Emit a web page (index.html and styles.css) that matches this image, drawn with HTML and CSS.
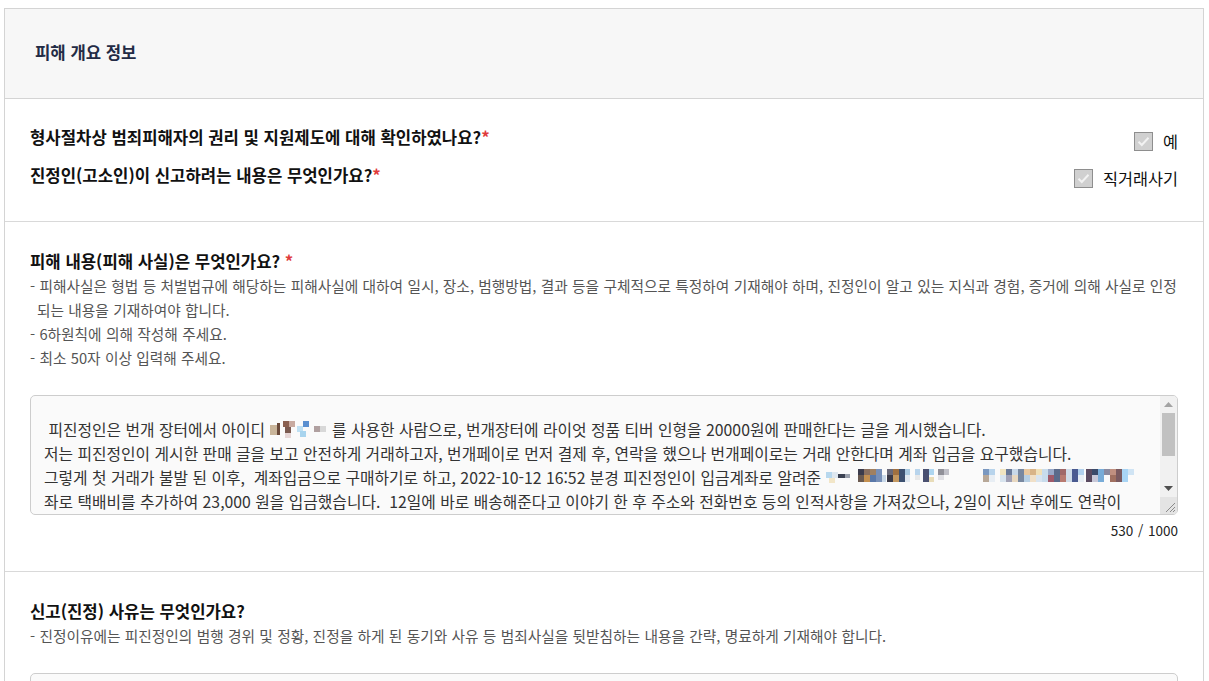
FILE: index.html
```html
<!DOCTYPE html>
<html lang="ko">
<head>
<meta charset="utf-8">
<title>피해 개요 정보</title>
<link rel="stylesheet" href="styles.css">
</head>
<body>
<div class="panel">
  <div class="panel-head"><h2 class="panel-title">피해 개요 정보</h2></div>

  <div class="section sec-check">
    <div class="questions">
      <p class="q">형사절차상 범죄피해자의 권리 및 지원제도에 대해 확인하였나요?<span class="req">*</span></p>
      <p class="q">진정인(고소인)이 신고하려는 내용은 무엇인가요?<span class="req">*</span></p>
    </div>
    <div class="answers">
      <label class="chk"><span class="box"><svg width="19" height="19" viewBox="0 0 19 19"><rect x="0.5" y="0.5" width="18" height="18" fill="#d0d0d0" stroke="#8e8e8e"/><path d="M4.5 9.8 L7.8 13 L14.5 5.8" fill="none" stroke="#f2f2f2" stroke-width="2"/></svg></span><span class="chk-label">예</span></label>
      <label class="chk"><span class="box"><svg width="19" height="19" viewBox="0 0 19 19"><rect x="0.5" y="0.5" width="18" height="18" fill="#d0d0d0" stroke="#8e8e8e"/><path d="M4.5 9.8 L7.8 13 L14.5 5.8" fill="none" stroke="#f2f2f2" stroke-width="2"/></svg></span><span class="chk-label">직거래사기</span></label>
    </div>
  </div>

  <div class="section sec-text">
    <h3 class="s-title">피해 내용(피해 사실)은 무엇인가요? <span class="req">*</span></h3>
    <ul class="guide">
      <li>- 피해사실은 형법 등 처벌법규에 해당하는 피해사실에 대하여 일시, 장소, 범행방법, 결과 등을 구체적으로 특정하여 기재해야 하며, 진정인이 알고 있는 지식과 경험, 증거에 의해 사실로 인정 되는 내용을 기재하여야 합니다.</li>
      <li>- 6하원칙에 의해 작성해 주세요.</li>
      <li>- 최소 50자 이상 입력해 주세요.</li>
    </ul>
    <div class="area">
      <div class="area-text">
        <div class="ln"> 피진정인은 번개 장터에서 아이디 <svg class="mosaic" width="58" height="18" viewBox="0 0 58 18"><rect x="0" y="4" width="7" height="10" fill="#c9b59a"/><rect x="7" y="2" width="3" height="12" fill="#6a4a3a"/><rect x="13" y="0" width="6" height="6" fill="#8a6050"/><rect x="19" y="0" width="6" height="6" fill="#c8aaa0"/><rect x="15" y="6" width="6" height="6" fill="#7a5a50"/><rect x="15" y="12" width="6" height="5" fill="#e6d6d6"/><rect x="27" y="5" width="6" height="6" fill="#bfe0f3"/><rect x="33" y="0" width="6" height="6" fill="#5a8fd0"/><rect x="30" y="10" width="6" height="6" fill="#a8d4ee"/><rect x="44" y="5" width="6" height="6" fill="#b0a0a0"/><rect x="50" y="5" width="6" height="6" fill="#d8d8d8"/></svg> 를 사용한 사람으로, 번개장터에 라이엇 정품 티버 인형을 20000원에 판매한다는 글을 게시했습니다.</div>
        <div class="ln">저는 피진정인이 게시한 판매 글을 보고 안전하게 거래하고자, 번개페이로 먼저 결제 후, 연락을 했으나 번개페이로는 거래 안한다며 계좌 입금을 요구했습니다.</div>
        <div class="ln">그렇게 첫 거래가 불발 된 이후,  계좌입금으로 구매하기로 하고, 2022-10-12 16:52 분경 피진정인이 입금계좌로 알려준 <svg class="mosaic" width="312" height="18" viewBox="0 0 312 18"><rect x="0" y="3" width="6" height="6" fill="#b8d8ee"/><rect x="6" y="3" width="6" height="6" fill="#dfe8f0"/><rect x="3" y="9" width="6" height="5" fill="#f2e6c8"/><rect x="12" y="5" width="7" height="4" fill="#3c4252"/><rect x="19" y="5" width="5" height="4" fill="#9aa0ac"/><rect x="32" y="0" width="6" height="6" fill="#3c3c4c"/><rect x="32" y="6" width="6" height="7" fill="#6a5a50"/><rect x="38" y="0" width="6" height="6" fill="#8a7060"/><rect x="38" y="6" width="6" height="7" fill="#c49050"/><rect x="44" y="0" width="6" height="6" fill="#a08060"/><rect x="44" y="6" width="6" height="7" fill="#5a78a8"/><rect x="50" y="0" width="6" height="13" fill="#7890b8"/><rect x="56" y="6" width="4" height="7" fill="#c8d8e8"/><rect x="61" y="0" width="6" height="6" fill="#6a6a7a"/><rect x="61" y="6" width="6" height="7" fill="#3a3a48"/><rect x="67" y="0" width="6" height="6" fill="#a07040"/><rect x="67" y="6" width="6" height="7" fill="#c49860"/><rect x="73" y="0" width="6" height="13" fill="#3c5070"/><rect x="79" y="0" width="5" height="6" fill="#a8c8e0"/><rect x="79" y="6" width="5" height="7" fill="#e0e8f0"/><rect x="89" y="0" width="5" height="6" fill="#b8d4ec"/><rect x="89" y="6" width="5" height="5" fill="#e8e8e8"/><rect x="97" y="0" width="6" height="13" fill="#4a5070"/><rect x="103" y="0" width="5" height="6" fill="#aed6f0"/><rect x="103" y="8" width="5" height="5" fill="#e8dcb8"/><rect x="112" y="0" width="6" height="6" fill="#909098"/><rect x="118" y="0" width="5" height="6" fill="#c0c0c8"/><rect x="112" y="6" width="6" height="5" fill="#e0e0e4"/><rect x="157" y="0" width="6" height="6" fill="#7a98c0"/><rect x="163" y="0" width="6" height="6" fill="#b8d4ec"/><rect x="157" y="6" width="6" height="7" fill="#b8a898"/><rect x="163" y="6" width="6" height="7" fill="#e8eef4"/><rect x="174" y="0" width="6" height="6" fill="#f0e4c0"/><rect x="174" y="6" width="6" height="7" fill="#d8e4ee"/><rect x="180" y="0" width="6" height="6" fill="#6a7a98"/><rect x="186" y="0" width="6" height="6" fill="#c8d8e8"/><rect x="180" y="6" width="6" height="7" fill="#a0a0b4"/><rect x="186" y="6" width="6" height="7" fill="#e8d8c0"/><rect x="192" y="0" width="6" height="13" fill="#7888a0"/><rect x="198" y="0" width="6" height="6" fill="#e8c8a0"/><rect x="198" y="6" width="6" height="7" fill="#b8d0e4"/><rect x="204" y="0" width="6" height="6" fill="#d8b488"/><rect x="204" y="6" width="6" height="7" fill="#f0e0c8"/><rect x="210" y="0" width="6" height="6" fill="#f0e0b8"/><rect x="210" y="6" width="6" height="7" fill="#d8e4f0"/><rect x="216" y="0" width="6" height="13" fill="#c8dcec"/><rect x="222" y="0" width="6" height="6" fill="#98a8c8"/><rect x="222" y="6" width="6" height="7" fill="#a05a6a"/><rect x="228" y="0" width="6" height="13" fill="#5a6a8a"/><rect x="234" y="0" width="6" height="6" fill="#a06868"/><rect x="234" y="6" width="6" height="7" fill="#b87a70"/><rect x="240" y="0" width="6" height="13" fill="#d0dce8"/><rect x="246" y="0" width="6" height="13" fill="#4a5a90"/><rect x="252" y="0" width="6" height="6" fill="#b0d0ec"/><rect x="252" y="6" width="6" height="7" fill="#e8eef4"/><rect x="260" y="0" width="6" height="13" fill="#5a4a60"/><rect x="266" y="0" width="6" height="6" fill="#3a4a6a"/><rect x="266" y="6" width="6" height="7" fill="#c8c8d8"/><rect x="272" y="0" width="6" height="13" fill="#78acd8"/><rect x="278" y="0" width="6" height="6" fill="#8a8aa0"/><rect x="284" y="0" width="6" height="6" fill="#c09080"/><rect x="284" y="6" width="6" height="7" fill="#a07060"/><rect x="290" y="0" width="6" height="13" fill="#7a5a60"/><rect x="296" y="0" width="6" height="13" fill="#a8d4f4"/><rect x="302" y="0" width="6" height="6" fill="#d0e4f4"/></svg></div>
        <div class="ln">좌로 택배비를 추가하여 23,000 원을 입금했습니다.  12일에 바로 배송해준다고 이야기 한 후 주소와 전화번호 등의 인적사항을 가져갔으나, 2일이 지난 후에도 연락이</div>
      </div>
      <div class="scrollbar">
        <div class="sb-btn"><svg width="9" height="5" viewBox="0 0 9 5"><path d="M0 5 L4.5 0 L9 5Z" fill="#a3a3a3"/></svg></div>
        <div class="sb-track"><div class="sb-thumb"></div></div>
        <div class="sb-btn"><svg width="9" height="5" viewBox="0 0 9 5"><path d="M0 0 L9 0 L4.5 5Z" fill="#505050"/></svg></div>
        <div class="sb-corner"><svg width="17" height="17" viewBox="0 0 17 17"><path d="M15 6 L6 15 M15 10 L10 15 M15 13 L13 15" stroke="#8a8a8a" stroke-width="1"/></svg></div>
      </div>
    </div>
    <div class="counter">530 / 1000</div>
  </div>

  <div class="section sec-text">
    <h3 class="s-title">신고(진정) 사유는 무엇인가요?</h3>
    <ul class="guide">
      <li>- 진정이유에는 피진정인의 범행 경위 및 정황, 진정을 하게 된 동기와 사유 등 범죄사실을 뒷받침하는 내용을 간략, 명료하게 기재해야 합니다.</li>
    </ul>
    <div class="area area-empty"></div>
  </div>
</div>
</body>
</html>
```

FILE: styles.css
```css
* { box-sizing: border-box; }
html, body { background: #fff; }
body {
  margin: 8px 5px 0 4px;
  font-family: "Noto Sans CJK KR", "Noto Sans", sans-serif;
  color: #222;
  overflow: hidden;
}
.panel {
  border: 1px solid #d4d4d4;
  border-bottom: none;
  width: 1200px;
}
.panel-head {
  background: #f7f7f7;
  height: 90px;
  display: flex;
  align-items: center;
  padding-left: 30px;
  border-bottom: 1px solid #d4d4d4;
}
.panel-title {
  margin: 0 0 3px 0;
  font-size: 16.7px;
  font-weight: 700;
  color: #232b45;
  line-height: 24px;
}
.section {
  border-bottom: 1px solid #d9d9d9;
  padding: 27px 25px 31px 25px;
}
.sec-check {
  display: flex;
  justify-content: space-between;
  padding-top: 26px;
  padding-bottom: 31px;
}
.questions { display: flex; flex-direction: column; gap: 14px; }
.q {
  margin: 0;
  font-size: 16.7px;
  font-weight: 700;
  line-height: 24px;
  color: #111;
}
.req { color: #e03b3b; font-weight: 700; }
.answers {
  display: flex;
  flex-direction: column;
  align-items: flex-end;
  gap: 13px;
  padding-top: 4px;
}
.chk {
  display: flex;
  align-items: center;
  gap: 10px;
  height: 24px;
  font-size: 16.3px;
  color: #111;
}
.box { display: block; width: 19px; height: 19px; }
.box svg { display: block; }
.chk-label { line-height: 24px; }
.s-title {
  margin: 0;
  font-size: 16.7px;
  font-weight: 700;
  line-height: 24px;
  color: #111;
}
.guide {
  list-style: none;
  margin: 1px -6px 0 0;
  padding: 0;
  font-size: 14.7px;
  line-height: 24px;
  word-spacing: 0.2px;
  color: #555;
  word-break: keep-all;
}
.guide li {
  padding-left: 7px;
  text-indent: -7px;
}
.area {
  margin-top: 25px;
  height: 120px;
  border: 1px solid #cdcdcd;
  border-radius: 5px;
  background: #fafafa;
  display: flex;
  overflow: hidden;
}
.area-text {
  flex: 1;
  padding: 22px 0 0 13px;
  font-size: 15.8px;
  line-height: 24px;
  color: #333;
  overflow: hidden;
}
.ln { white-space: pre; overflow: hidden; height: 24px; }
.mosaic { display: inline-block; vertical-align: -3px; }
.scrollbar {
  flex: none;
  width: 17px;
  background: #f1f1f1;
  display: flex;
  flex-direction: column;
}
.sb-btn {
  height: 17px;
  display: flex;
  align-items: center;
  justify-content: center;
}
.sb-track { flex: 1; padding: 0 2px; }
.sb-thumb { height: 43px; background: #c1c1c1; }
.sb-corner { height: 17px; background: #e4e4e4; }
.sb-corner svg { display: block; }
.counter {
  text-align: right;
  font-size: 13.5px;
  word-spacing: 1px;
  line-height: 20px;
  margin-top: 5px;
  color: #222;
}
.area-empty { height: 120px; }
```
